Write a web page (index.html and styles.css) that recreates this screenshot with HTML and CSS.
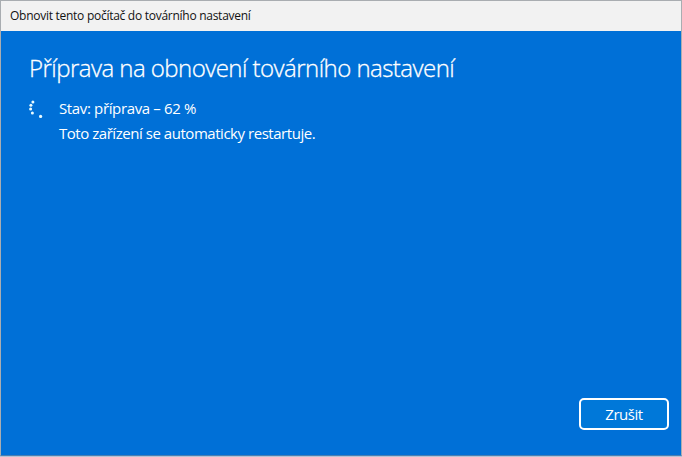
FILE: index.html
```html
<!DOCTYPE html>
<html lang="cs">
<head>
<meta charset="utf-8">
<title>Obnovit tento počítač do továrního nastavení</title>
<link rel="stylesheet" href="styles.css">
</head>
<body>
<div class="window">
  <header class="titlebar"><span>Obnovit tento počítač do továrního nastavení</span></header>
  <main class="content">
    <h1 class="heading"><span>Příprava na obnovení továrního nastavení</span></h1>
    <div class="status">
      <svg class="spinner" width="20" height="24" viewBox="0 0 20 24" aria-hidden="true">
        <circle cx="3.9" cy="3" r="1.5"/>
        <circle cx="1.9" cy="6.3" r="1.5"/>
        <circle cx="1.6" cy="9.9" r="1.5"/>
        <circle cx="3.4" cy="14" r="1.5"/>
        <circle cx="11.6" cy="17.4" r="1.6"/>
      </svg>
      <div class="messages">
        <p class="state"><span>Stav: příprava – 62 %</span></p>
        <p class="note"><span>Toto zařízení se automaticky restartuje.</span></p>
      </div>
    </div>
    <footer class="actions"><button class="cancel" type="button"><span>Zrušit</span></button></footer>
  </main>
</div>
</body>
</html>
```
FILE: styles.css
```css
* { box-sizing: border-box; }
body { margin: 0; background: #b4c4d6; font-family: "Segoe UI", "Open Sans", "Noto Sans", sans-serif; }
.window {
  display: flex;
  flex-direction: column;
  width: 682px;
  height: 456px;
  overflow: hidden;
  border: 1px solid #a9adb1;
  border-bottom-color: #4b7fb2;
  background: #0070d7;
}
.titlebar {
  height: 30px;
  padding-left: 9px;
  background: #f2f2f2;
  color: #111;
  font-size: 12px;
  line-height: 29px;
  letter-spacing: -0.27px;
  white-space: nowrap;
}
.content {
  flex: 1;
  display: flex;
  flex-direction: column;
  padding: 20px 12px 25px 28px;
  color: #fff;
}
.heading {
  margin: 0;
  font-size: 24px;
  font-weight: 300;
  line-height: 33px;
  letter-spacing: -0.54px;
  white-space: nowrap;
  -webkit-text-stroke: 0.3px #fff;
}
.status { display: flex; gap: 10px; margin-top: 12px; }
.spinner { flex: none; margin-top: 3px; fill: #e8fbff; }
.messages { font-size: 15px; line-height: 25px; letter-spacing: -0.46px; white-space: nowrap; }
.messages p { margin: 0; }
.state { letter-spacing: -0.36px; }
.actions { display: flex; justify-content: flex-end; margin-top: auto; }
.cancel {
  width: 90px;
  height: 32px;
  padding: 0;
  border: 2px solid #fff;
  border-radius: 5px;
  background: #0078d9;
  color: #fff;
  font: 15px/26px "Segoe UI", "Open Sans", "Noto Sans", sans-serif;
  letter-spacing: -0.45px;
}
```
